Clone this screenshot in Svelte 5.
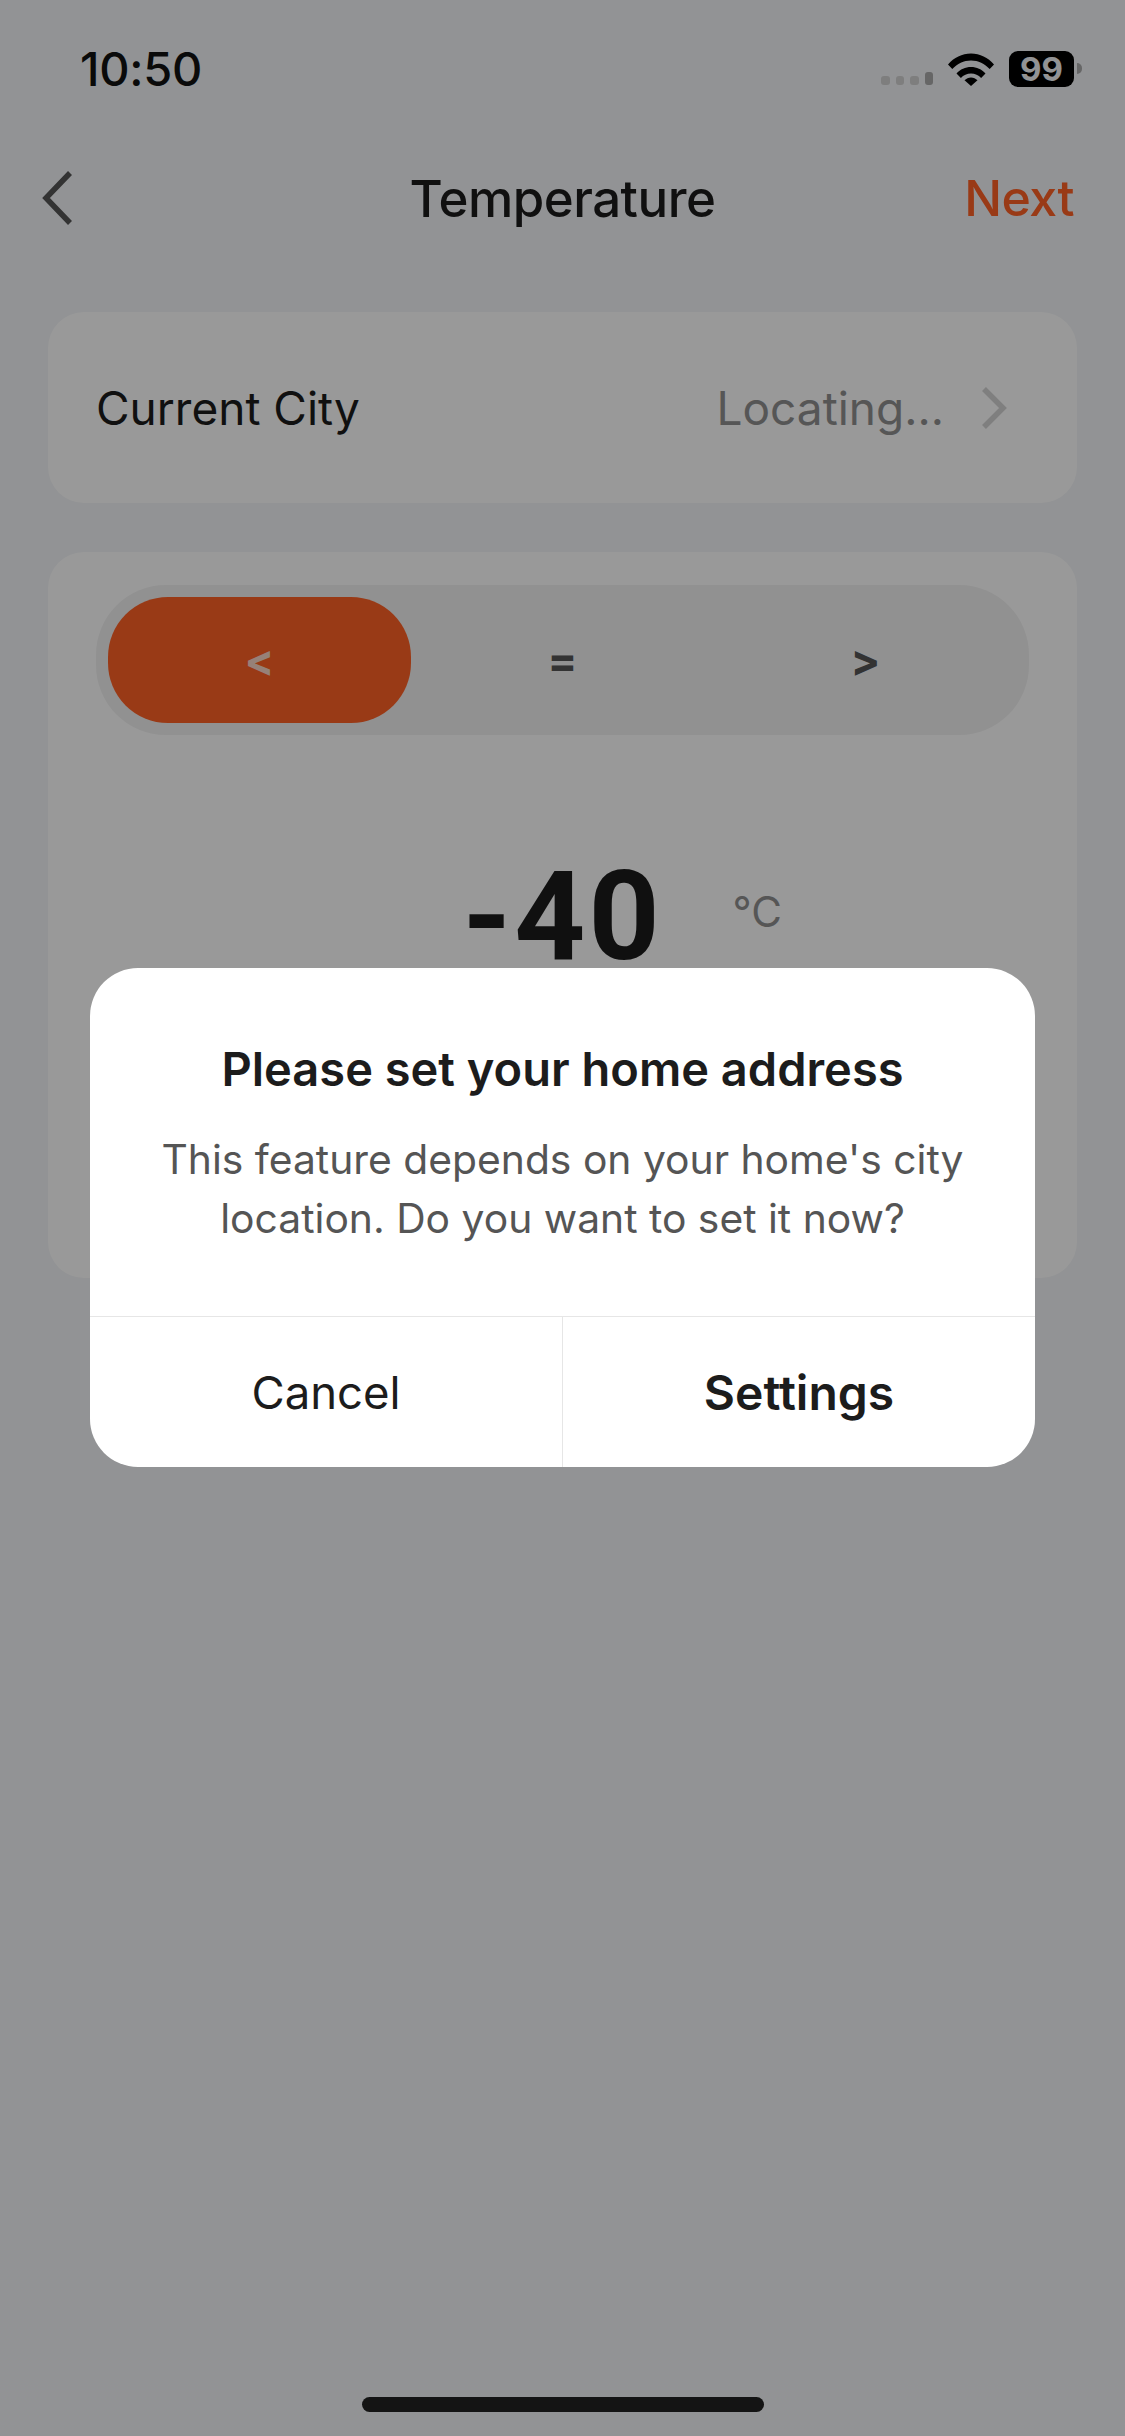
<script>
  const compares = ['<', '=', '>'];
  let active = $state('<');
</script>

<div class="page">
  <div class="status">
    <span class="time">10:50</span>
    <div class="status-icons">
      <div class="signal">
        <i></i><i></i><i></i><i class="tall"></i>
      </div>
      <svg class="wifi" width="46" height="33" viewBox="0 0 46 33">
        <path d="M0 11.500C6 4.500 14 .5 23 .5s17 4 23 11l-4.300 4.600C36.700 10.300 30.300 7.400 23 7.400S9.300 10.300 4.300 16.100Z" />
        <path d="M8.500 20.500C12.300 16.300 17.300 14 23 14s10.700 2.300 14.500 6.500l-4.400 4.500C30.500 22 27 20.400 23 20.400s-7.500 1.600-10.100 4.600Z" />
        <path d="M16.500 27.300C18.300 25.400 20.500 24.400 23 24.400s4.700 1 6.500 2.900L23 33Z" />
      </svg>
      <div class="battery"><span>99</span></div>
      <div class="nub"></div>
    </div>
  </div>

  <header class="nav">
    <svg class="back" width="30" height="54" viewBox="0 0 30 54">
      <path d="M28 2 4 27l24 25" />
    </svg>
    <h1>Temperature</h1>
    <span class="next">Next</span>
  </header>

  <section class="card city">
    <span>Current City</span>
    <div class="locating">
      <span>Locating...</span>
      <svg width="26" height="42" viewBox="0 0 26 42">
        <path d="M3 2l19 19L3 40" />
      </svg>
    </div>
  </section>

  <section class="card threshold">
    <div class="segment">
      {#each compares as c}
        <button class:on={active === c} onclick={() => (active = c)}>{c}</button>
      {/each}
    </div>
    <div class="reading">
      <span class="value">-40</span>
      <span class="unit">°C</span>
    </div>
  </section>

  <div class="home-bar"></div>

  <div class="overlay">
    <div class="dialog">
      <div class="body">
        <h2>Please set your home address</h2>
        <p>This feature depends on your home's city location. Do you want to set it now?</p>
      </div>
      <div class="actions">
        <button>Cancel</button>
        <button class="primary">Settings</button>
      </div>
    </div>
  </div>
</div>

<style>
  :global(body) {
    margin: 0;
    background: #f3f5f8;
  }

  .page {
    position: relative;
    width: 1125px;
    height: 2436px;
    display: flex;
    flex-direction: column;
    overflow: hidden;
    background: #f3f5f8;
    color: #1c1c1c;
    font-family: Inter, "Liberation Sans", sans-serif;
  }

  .status {
    height: 136px;
    box-sizing: border-box;
    padding: 44px 43px 0 80px;
    display: flex;
    justify-content: space-between;
    align-items: flex-start;
  }

  .time {
    font-size: 47px;
    line-height: 50px;
    font-weight: 500;
    letter-spacing: -0.3px;
    color: #111;
  }

  .status-icons {
    display: flex;
    align-items: flex-start;
    padding-top: 7px;
  }

  .signal {
    display: flex;
    align-items: flex-end;
    gap: 6px;
    height: 34px;
    margin-right: 15px;
  }

  .signal i {
    width: 8.500px;
    height: 9px;
    border-radius: 3px;
    background: #d2d2d2;
  }

  .signal i.tall {
    height: 13px;
    background: #aaa;
  }

  .wifi {
    fill: #000;
    margin-top: 2px;
    margin-right: 15px;
  }

  .battery {
    width: 65px;
    height: 36px;
    border-radius: 9px;
    background: #000;
    display: flex;
    align-items: center;
    justify-content: center;
    color: #f3f5f8;
    font-size: 33px;
    font-weight: 700;
  }

  .nub {
    width: 5px;
    height: 11px;
    margin: 12px 0 0 3px;
    border-radius: 0 5px 5px 0;
    background: #ababab;
  }

  .nav {
    height: 124px;
    display: flex;
    align-items: center;
    justify-content: space-between;
    padding: 0 51px 0 42px;
    position: relative;
  }

  .nav h1 {
    position: absolute;
    left: 0;
    right: 0;
    margin: 0;
    text-align: center;
    font-size: 51px;
    font-weight: 500;
    letter-spacing: -0.5px;
    color: #1c1c1c;
  }

  .back {
    fill: none;
    stroke: #555;
    stroke-width: 5.5;
  }

  .next {
    font-size: 50px;
    font-weight: 500;
    letter-spacing: -0.5px;
    color: #ff6126;
  }

  .card {
    margin: 0 48px;
    background: #fff;
    border-radius: 36px;
  }

  .city {
    margin-top: 52px;
    height: 191px;
    box-sizing: border-box;
    padding: 0 70px 0 48px;
    display: flex;
    align-items: center;
    justify-content: space-between;
    font-size: 46px;
    color: #1c1c1c;
  }

  .locating {
    display: flex;
    align-items: center;
    gap: 37px;
    color: #909090;
  }

  .locating svg {
    fill: none;
    stroke: #d4d4d4;
    stroke-width: 5.5;
  }

  .threshold {
    margin-top: 49px;
    height: 726px;
    box-sizing: border-box;
    padding: 33px 48px 0 48px;
  }

  .segment {
    display: grid;
    grid-template-columns: repeat(3, 1fr);
    height: 150px;
    box-sizing: border-box;
    padding: 12px;
    border-radius: 70px;
    background: #f2f2f2;
  }

  .segment button {
    border: 0;
    border-radius: 60px;
    background: none;
    font: inherit;
    font-size: 44px;
    font-weight: 700;
    color: #555;
    padding: 0;
  }

  .segment button.on {
    background: #ff6126;
    color: #fbd8c9;
  }

  .reading {
    display: grid;
    grid-template-columns: 1fr auto 1fr;
    align-items: start;
    margin-top: 120px;
    column-gap: 70px;
  }

  .value {
    grid-column: 2;
    font-family: Roboto, sans-serif;
    font-size: 124px;
    line-height: 124px;
    font-weight: 700;
    letter-spacing: 3px;
    color: #1c1c1c;
  }

  .unit {
    grid-column: 3;
    font-size: 42px;
    line-height: 50px;
    margin-top: 32px;
    color: #909090;
  }

  .home-bar {
    margin: auto auto 24px;
    width: 402px;
    height: 15px;
    border-radius: 8px;
    background: #222;
  }

  .overlay {
    position: absolute;
    inset: 0;
    display: flex;
    justify-content: center;
    align-items: flex-start;
    padding-top: 968px;
    box-sizing: border-box;
    background: rgba(0, 0, 0, 0.4);
  }

  .dialog {
    width: 945px;
    height: 499px;
    display: flex;
    flex-direction: column;
    border-radius: 48px;
    background: #fff;
    overflow: hidden;
  }

  .body {
    flex: 1;
    padding: 70px 40px 0;
    text-align: center;
  }

  .dialog h2 {
    margin: 0 0 30px;
    font-size: 47px;
    line-height: 62px;
    font-weight: 600;
    color: #1c1c1c;
  }

  .dialog p {
    margin: 0;
    font-size: 40.800px;
    line-height: 59px;
    color: #555;
  }

  .actions {
    height: 150px;
    display: grid;
    grid-template-columns: 472px 1fr;
    border-top: 1px solid #e6e6e6;
  }

  .actions button {
    border: 0;
    background: none;
    font: inherit;
    font-size: 45.500px;
    color: #1c1c1c;
    padding: 0;
  }

  .actions button.primary {
    border-left: 1px solid #e6e6e6;
    font-size: 48px;
    font-weight: 600;
  }
</style>
